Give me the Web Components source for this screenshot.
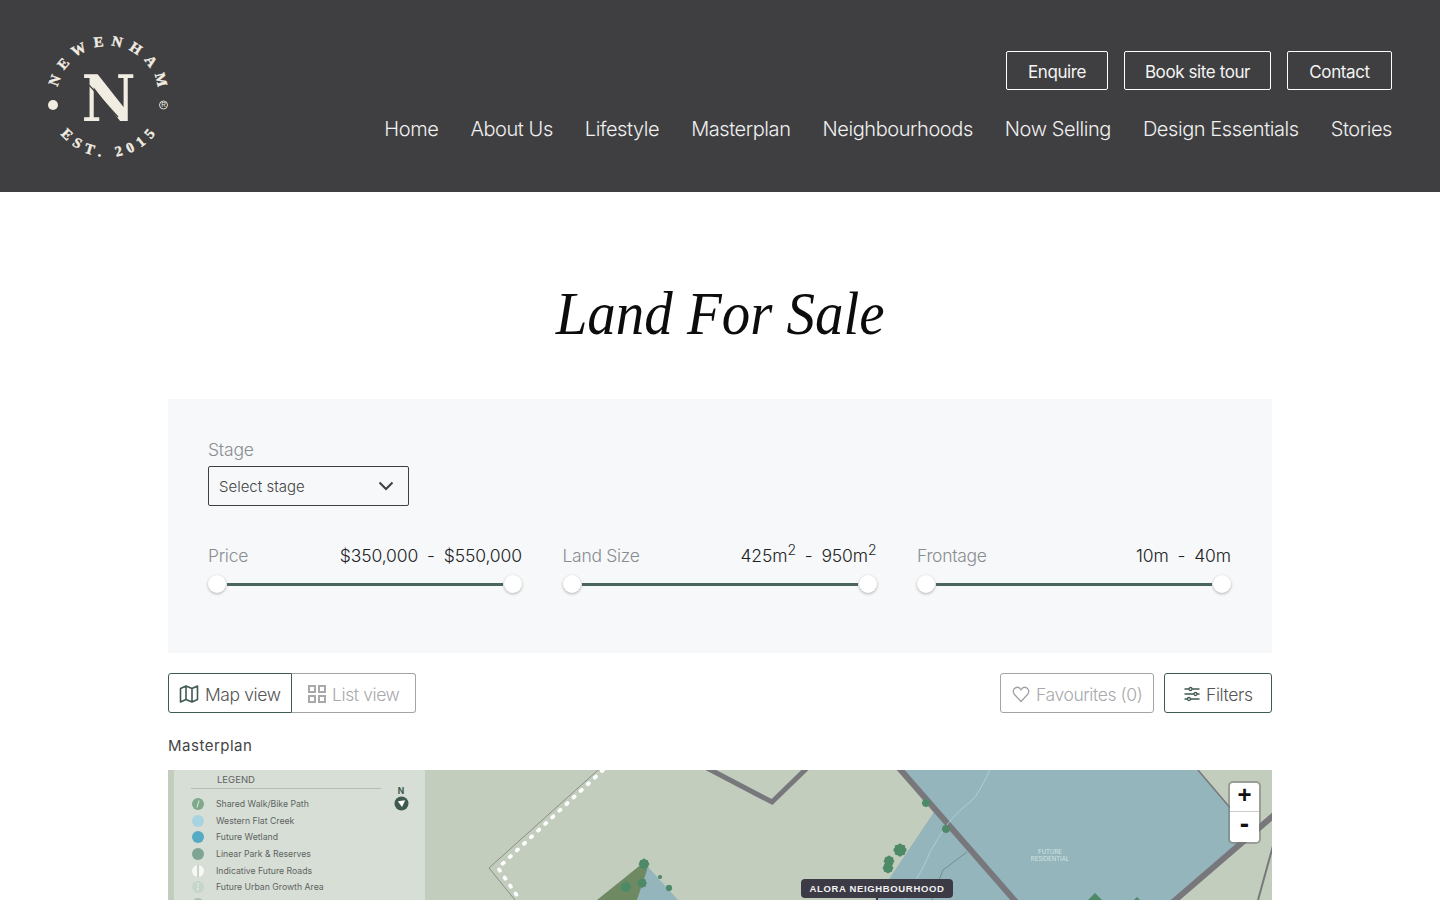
<!DOCTYPE html>
<html lang="en">
<head>
<meta charset="utf-8">
<title>Land For Sale</title>
<style>
html, body { margin: 0; height: 900px; overflow: hidden; background: #fff; }
body { font-family: Inter, "Liberation Sans", sans-serif; font-weight: 300; color: #333; }
</style>
</head>
<body>
<site-header></site-header>
<land-page></land-page>

<script>
customElements.define('outline-button', class extends HTMLElement {
	constructor() {
		super();
		this.attachShadow({mode: 'open'}).innerHTML = `<style>
:host {
	display: inline-flex;
	align-items: center;
	justify-content: center;
	box-sizing: border-box;
	height: 39px;
	padding-top: 2px;
	border: 1px solid #fff;
	border-radius: 2px;
	color: #f4f4f4;
	font-size: 17px;
	font-weight: 400;
	letter-spacing: -0.4px;
}
</style><slot></slot>`;
	}
});

customElements.define('site-logo', class extends HTMLElement {
	constructor() {
		super();
		this.attachShadow({mode: 'open'}).innerHTML = `<style>
:host { display: block; width: 130px; height: 130px; }
svg { display: block; }
text { font-family: "Liberation Serif", serif; font-weight: 700; fill: #f2ede2; stroke: #f2ede2; stroke-width: .4; }
.big { font-family: "DejaVu Serif", serif; stroke-width: 0; }
.reg { font-family: "Liberation Sans", sans-serif; font-weight: 400; stroke-width: 0; }
</style>
<svg width="130" height="130" viewBox="0 0 130 130">
	<defs>
		<path id="top" d="M9 67 A51 51 0 0 1 111 67"/>
		<path id="bottom" d="M0 67 A60 60 0 0 0 120 67"/>
	</defs>
	<text font-size="14.500" letter-spacing="7.200" text-anchor="middle"><textPath href="#top" startOffset="52.300%">NEWENHAM</textPath></text>
	<text font-size="14.500" letter-spacing="5.800" text-anchor="middle"><textPath href="#bottom" startOffset="51.600%">EST. 2015</textPath></text>
	<circle cx="5" cy="75" r="5" fill="#f2ede2"/>
	<circle cx="115.500" cy="75" r="4" fill="none" stroke="#f2ede2" stroke-width=".9"/>
	<text class="reg" x="115.500" y="77.300" font-size="6.500" text-anchor="middle">R</text>
	<text class="big" x="0" y="0" font-size="63" text-anchor="middle" transform="translate(60.500 90.500) scale(.94 1)">N</text>
	<path d="M41 55 L70 87" stroke="#3f3f41" stroke-width="1.200" fill="none"/>
</svg>`;
	}
});

customElements.define('site-header', class extends HTMLElement {
	constructor() {
		super();
		this.attachShadow({mode: 'open'}).innerHTML = `<style>
:host {
	display: flex;
	justify-content: space-between;
	box-sizing: border-box;
	height: 192px;
	padding: 30px 48px 0 48px;
	background: #3f3f41;
}
.right { display: flex; flex-direction: column; align-items: flex-end; padding-top: 21px; }
.actions { display: flex; gap: 16px; }
nav { display: flex; gap: 32px; margin-top: 26px; color: #f0f0f0; font-size: 20px; line-height: 26px; letter-spacing: -0.42px; }
</style>
<site-logo></site-logo>
<div class="right">
	<div class="actions">
		<outline-button style="width:102px">Enquire</outline-button>
		<outline-button style="width:147px">Book site tour</outline-button>
		<outline-button style="width:105px">Contact</outline-button>
	</div>
	<nav>
		<span>Home</span><span>About Us</span><span>Lifestyle</span><span>Masterplan</span><span>Neighbourhoods</span><span>Now Selling</span><span>Design Essentials</span><span>Stories</span>
	</nav>
</div>`;
	}
});

customElements.define('range-filter', class extends HTMLElement {
	constructor() {
		super();
		this.attachShadow({mode: 'open'}).innerHTML = `<style>
:host { display: block; flex: 0 0 314px; }
.top { display: flex; justify-content: space-between; align-items: center; height: 24px; }
.label { color: #8a8d90; font-size: 17.500px; letter-spacing: -0.3px; }
.value { color: #222; font-size: 17.500px; letter-spacing: -0.1px; word-spacing: 4px; }
.slider { display: flex; align-items: center; justify-content: space-between; margin-top: 8px; height: 18px; }
.thumb { width: 18px; height: 18px; border-radius: 50%; background: #fff; box-shadow: 0 1px 3px rgba(0,0,0,.3); }
.track { flex: 1; height: 3px; margin: 0 1px; background: #4a665c; }
::slotted(sup) { font-size: 14px; line-height: 0; }
</style>
<div class="top"><span class="label"><slot name="label"></slot></span><span class="value"><slot></slot></span></div>
<div class="slider"><div class="thumb"></div><div class="track"></div><div class="thumb"></div></div>`;
	}
});

customElements.define('filter-panel', class extends HTMLElement {
	constructor() {
		super();
		this.attachShadow({mode: 'open'}).innerHTML = `<style>
:host { display: block; box-sizing: border-box; height: 254px; padding: 40px 40px 0; background: #f6f8fa; }
.stage { color: #8a8d90; font-size: 17.500px; line-height: 22px; letter-spacing: -0.2px; }
.select {
	display: flex;
	align-items: center;
	justify-content: space-between;
	box-sizing: border-box;
	width: 201px;
	height: 40px;
	margin-top: 5px;
	padding: 0 14px 0 10px;
	border: 1px solid #3f3f41;
	border-radius: 2px;
	color: #444;
	font-size: 15px;
}
.ranges { display: flex; justify-content: space-between; margin: 37px 1px 0 0; }
</style>
<div class="stage">Stage</div>
<div class="select"><span>Select stage</span>
	<svg width="16" height="10" viewBox="0 0 16 10" fill="none" stroke="#3f3f41" stroke-width="2"><path d="M1.500 1.500 8 8l6.500-6.500"/></svg>
</div>
<div class="ranges"><slot></slot></div>`;
	}
});

customElements.define('tool-button', class extends HTMLElement {
	constructor() {
		super();
		this.attachShadow({mode: 'open'}).innerHTML = `<style>
:host {
	display: inline-flex;
	align-items: center;
	box-sizing: border-box;
	height: 40px;
	gap: 6px;
	border: 1px solid #a3a4a8;
	border-radius: 3px;
	color: #a9a9ac;
	font-size: 17.500px;
	letter-spacing: -0.4px;
	white-space: nowrap;
}
:host([active]) { border-color: #3f5a50; color: #555; }
::slotted(svg) { flex: none; }
</style><slot></slot>`;
	}
});

customElements.define('map-zoom', class extends HTMLElement {
	constructor() {
		super();
		this.attachShadow({mode: 'open'}).innerHTML = `<style>
:host {
	position: absolute;
	top: 13px;
	right: 13px;
	width: 29px;
	border-radius: 3px;
	background: #fff;
	box-shadow: 0 0 0 2px rgba(120,120,120,.55);
	font: 700 24px/24px "Liberation Sans", sans-serif;
	color: #111;
	text-align: center;
}
div { height: 28px; }
div + div { height: 30px; border-top: 1px solid #ccc; font-size: 28px; line-height: 24px; }
</style><div>+</div><div>-</div>`;
	}
});

customElements.define('map-legend', class extends HTMLElement {
	constructor() {
		super();
		const rows = [
			['#7fa98a', 'Shared Walk/Bike Path', '<path d="M7 2.500 5 9.500" stroke="#e8eee8" stroke-width=".9"/>'],
			['#a9d3e0', 'Western Flat Creek', ''],
			['#56abc4', 'Future Wetland', ''],
			['#7ea495', 'Linear Park &amp; Reserves', ''],
			['#f6f8f4', 'Indicative Future Roads', '<path d="M6 0V12" stroke="#8d958e" stroke-width=".8"/>'],
			['#c5d6c8', 'Future Urban Growth Area', '<path d="M6 2V10" stroke="#eef2ee" stroke-width="1.200" stroke-dasharray="1.500 1"/>'],
			['#a9c2ae', '', '']
		];
		this.attachShadow({mode: 'open'}).innerHTML = `<style>
:host {
	position: absolute;
	left: 6px;
	top: 0;
	box-sizing: border-box;
	width: 251px;
	height: 150px;
	padding-left: 17px;
	background: #d6ded5;
	color: #5f6363;
	font: 400 8.700px Inter, sans-serif;
}
.head { width: 190px; height: 19px; box-sizing: border-box; margin-bottom: 7px; padding: 4px 0 0 26px; border-bottom: 1px solid #b5bdb4; font-size: 9.500px; line-height: 11px; }
.row { display: flex; align-items: center; gap: 12px; height: 16.600px; margin-left: 1px; }
svg { flex: none; }
.north { position: absolute; left: 219px; top: 17px; width: 16px; text-align: center; color: #3f5a50; font-weight: 700; font-size: 8.500px; line-height: 9px; }
.north svg { display: block; margin: 0 auto; }
</style>
<div class="head">LEGEND</div>
${rows.map(r => `<div class="row"><svg width="12" height="12" viewBox="0 0 12 12"><circle cx="6" cy="6" r="6" fill="${r[0]}"/>${r[2]}</svg>${r[1] ? `<span>${r[1]}</span>` : ''}</div>`).join('')}
<div class="north">N<svg width="15" height="15" viewBox="0 0 15 15"><circle cx="7.500" cy="7.500" r="7" fill="#3f5a50"/><path d="M3.800 5.200 11.200 4.200 8 11z" fill="#fff"/></svg></div>`;
	}
});

customElements.define('map-tag', class extends HTMLElement {
	constructor() {
		super();
		this.attachShadow({mode: 'open'}).innerHTML = `<style>
:host {
	position: absolute;
	left: 633px;
	top: 109px;
	box-sizing: border-box;
	width: 152px;
	height: 19px;
	border-radius: 4px;
	background: #3c3a45;
	color: #f2f2f2;
	font: 700 9.500px/19px "Liberation Sans", sans-serif;
	letter-spacing: .65px;
	text-align: center;
	white-space: nowrap;
}
</style><slot></slot>`;
	}
});

customElements.define('masterplan-map', class extends HTMLElement {
	constructor() {
		super();
		// trees are little blobs, a ring of dots around a disc
		const tree = (x, y, r) => {
			let dots = `<circle cx="${x}" cy="${y}" r="${r}" fill="#4f8a68"/>`;
			for (let a = 0; a < 8; a++) {
				const cx = x + Math.cos(a * Math.PI / 4) * r * .8;
				const cy = y + Math.sin(a * Math.PI / 4) * r * .8;
				dots += `<circle cx="${cx.toFixed(1)}" cy="${cy.toFixed(1)}" r="${(r / 2.5).toFixed(1)}" fill="#4f8a68"/>`;
			}
			return dots;
		};
		this.attachShadow({mode: 'open'}).innerHTML = `<style>
:host { display: block; position: relative; height: 130px; overflow: hidden; background: #c2cdbd; }
svg { position: absolute; left: 0; top: 0; }
.small { font: 400 6px Inter, sans-serif; fill: #d6e4e4; }
</style>
<svg width="1104" height="130" viewBox="168 770 1104 130">
	<polygon points="900,770 1198,770 1232,810 1245,838 1173,900 875,900 934,812" fill="#93b5bb"/>
	<polygon points="643,863 597,900 637,900 650,872" fill="#6f8a63"/>
	<polygon points="648,867 678,900 637,900" fill="#93b5bb"/>
	<path d="M598 770 489 868 515 900" fill="none" stroke="#8a8f88" stroke-width="1"/>
	<path d="M603 770 498 868 520 900" fill="none" stroke="#fff" stroke-width="3.800" stroke-linecap="round" stroke-dasharray="1.500 8.200"/>
	<path d="M707 768 772 802 807 768" fill="none" stroke="#78787c" stroke-width="5"/>
	<path d="M899 768 1016 902" fill="none" stroke="#78787c" stroke-width="6"/>
	<path d="M1173 902 1274 815" fill="none" stroke="#78787c" stroke-width="6"/>
	<path d="M1198 770 1232 810" fill="none" stroke="#78787c" stroke-width="1.500"/>
	<path d="M1273 846 1258 900" fill="none" stroke="#78787c" stroke-width="2"/>
	<path d="M990 770C984 782 978 795 970 802 960 810 952 818 947 825 940 835 936 842 930 852 926 862 922 870 917 878L905 900" fill="none" stroke="#add8e0" stroke-width=".8"/>
	<path d="M967 852 943 870 939 880 932 900" fill="none" stroke="#6a7a7c" stroke-width=".7"/>
	${tree(644, 864, 4.500)}${tree(626, 887, 4.500)}${tree(642, 883, 4)}${tree(660, 877, 1.800)}${tree(669, 888, 2.800)}
	${tree(900, 850, 5.500)}${tree(889, 861, 4.500)}${tree(888, 868, 4.500)}${tree(926, 803, 3.500)}${tree(946, 829, 3.500)}
	<polygon points="1095,893 1102,900 1088,900" fill="#4f8a68"/>
	<polygon points="1137,897 1140,900 1134,900" fill="#4f8a68"/>
	<text class="small" x="1050" y="854" text-anchor="middle">FUTURE</text>
	<text class="small" x="1050" y="861" text-anchor="middle">RESIDENTIAL</text>
	<path d="M877 897V900" stroke="#3c3a45" stroke-width="2"/>
</svg>
<map-legend></map-legend>
<map-tag>ALORA NEIGHBOURHOOD</map-tag>
<map-zoom></map-zoom>`;
	}
});

customElements.define('land-page', class extends HTMLElement {
	constructor() {
		super();
		this.attachShadow({mode: 'open'}).innerHTML = `<style>
:host { display: block; width: 1104px; margin: 0 auto; }
h1 {
	margin: 0;
	padding: 86px 0 51px;
	font: italic 400 62px/70px "Liberation Serif", serif;
	color: #0c0c0c;
	text-align: center;
}
h1 span { display: inline-block; transform: scaleX(.918); }
.toolbar { display: flex; justify-content: space-between; margin-top: 20px; }
.group { display: flex; }
.group-right { display: flex; gap: 10px; }
.map-btn { width: 124px; padding: 2px 0 0 10px; border-radius: 3px 0 0 3px; }
.list-btn { width: 124px; padding: 2px 0 0 16px; border-left: 0; border-radius: 0 3px 3px 0; }
.fav-btn { width: 154px; padding: 2px 0 0 11px; }
.filter-btn { width: 108px; padding: 2px 0 0 19px; }
.caption { margin: 23px 0 14px; color: #444; font-size: 15px; font-weight: 400; line-height: 20px; letter-spacing: .5px; }
</style>
<h1><span>Land For Sale</span></h1>
<filter-panel>
	<range-filter><span slot="label">Price</span>$350,000 - $550,000</range-filter>
	<range-filter><span slot="label">Land Size</span>425m<sup>2</sup> - 950m<sup>2</sup></range-filter>
	<range-filter><span slot="label">Frontage</span>10m - 40m</range-filter>
</filter-panel>
<div class="toolbar">
	<div class="group">
		<tool-button class="map-btn" active>
			<svg width="20" height="20" viewBox="0 0 20 20" fill="none" stroke="#3f5a50" stroke-width="1.600" stroke-linejoin="round"><path d="M1.500 4.500 7 2l6 2.500L18.500 2v13.500L13 18l-6-2.500L1.500 18zM7 2v13.500M13 4.500V18"/></svg>
			Map view
		</tool-button>
		<tool-button class="list-btn">
			<svg width="18" height="18" viewBox="0 0 18 18" fill="none" stroke="#a9a9ac" stroke-width="2"><rect x="1" y="1" width="6" height="6"/><rect x="11" y="1" width="6" height="6"/><rect x="1" y="11" width="6" height="6"/><rect x="11" y="11" width="6" height="6"/></svg>
			List view
		</tool-button>
	</div>
	<div class="group-right">
		<tool-button class="fav-btn">
			<svg width="18" height="18" viewBox="0 0 18 18" fill="none" stroke="#a0a0a3" stroke-width="1.300"><path d="M9 16.500 2.500 9.500C.5 7.300 1 4 3.300 2.800 5.500 1.700 7.800 2.600 9 4.700 10.200 2.600 12.500 1.700 14.700 2.800 17 4 17.500 7.300 15.500 9.500z"/></svg>
			Favourites (0)
		</tool-button>
		<tool-button class="filter-btn" active>
			<svg width="16" height="16" viewBox="0 0 16 16" fill="none" stroke="#3f5a50" stroke-width="1.300"><path d="M0.500 3H5M8 3H15.500M0.500 8H10M13 8H15.500M0.500 13H3.500M6.500 13H15.500"/><circle cx="6.500" cy="3" r="1.500"/><circle cx="11.500" cy="8" r="1.500"/><circle cx="5" cy="13" r="1.500"/></svg>
			Filters
		</tool-button>
	</div>
</div>
<div class="caption">Masterplan</div>
<masterplan-map></masterplan-map>`;
	}
});
</script>
</body>
</html>
